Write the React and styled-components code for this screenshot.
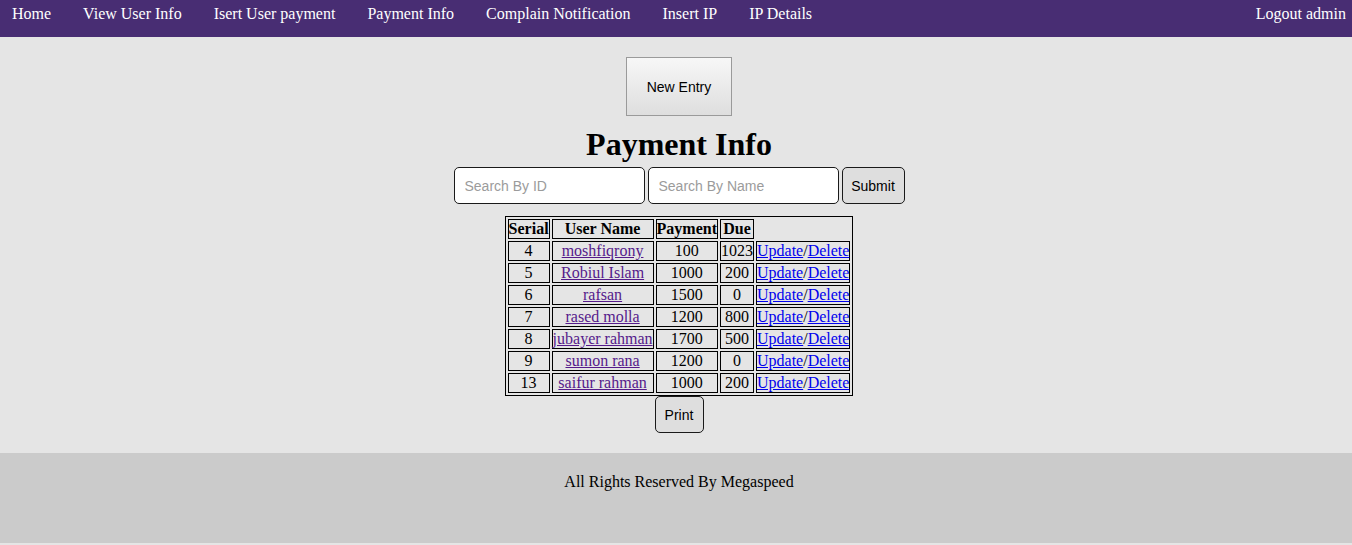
import React from "react";
import styled, { createGlobalStyle } from "styled-components";

const Global = createGlobalStyle`
  html, body { margin: 0; padding: 0; background: #e5e5e5; }
  body { font-family: "Liberation Serif", "Times New Roman", serif; font-size: 16px; color: #000; }
`;

const Nav = styled.nav`
  display: flex;
  align-items: center;
  height: 37px;
  background: #482d73;
  padding: 0 6px 0 12px;
  box-sizing: border-box;
`;

const NavLinks = styled.div`
  display: flex;
  gap: 32px;
  flex: 1;
  margin-top: -9px;
`;

const NavLink = styled.a`
  color: #fff;
  text-decoration: none;
  font-size: 16px;
  line-height: 18px;
  white-space: nowrap;
`;

const Logout = styled(NavLink)`
  margin-top: -9px;
`;

const Main = styled.main`
  display: flex;
  flex-direction: column;
  align-items: center;
  padding: 20px 0 20px 6px;
`;

const EntryButton = styled.button`
  font-family: "Liberation Sans", Arial, sans-serif;
  font-size: 14px;
  color: #000;
  width: 106px;
  height: 59px;
  background: linear-gradient(#f7f7f7, #dedede);
  border: 1px solid #9a9a9a;
  border-radius: 0;
  padding: 0;
`;

const Title = styled.h1`
  font-size: 32px;
  font-weight: bold;
  margin: 10px 0 0;
  line-height: 37px;
`;

const SearchForm = styled.form`
  display: flex;
  gap: 3px;
  margin-top: 4px;
`;

const SearchInput = styled.input`
  box-sizing: border-box;
  width: 191px;
  height: 37px;
  border: 1px solid #1a1a1a;
  border-radius: 5px;
  background: #fff;
  padding: 0 10px;
  font-family: "Liberation Sans", Arial, sans-serif;
  font-size: 14px;
  &::placeholder { color: #9b9b9b; }
`;

const GreyButton = styled.button`
  box-sizing: border-box;
  height: 37px;
  width: ${p => p.$w}px;
  border: 1px solid #1a1a1a;
  border-radius: 5px;
  background: #dedede;
  font-family: "Liberation Sans", Arial, sans-serif;
  font-size: 14px;
  color: #000;
  padding: 0;
`;

const Table = styled.table`
  margin-top: 12px;
  border: 1px solid #000;
  border-spacing: 2px;
  font-size: 16px;
  line-height: 18px;
`;

const Th = styled.th`
  border: 1px solid #000;
  padding: 0 0;
  font-weight: bold;
`;

const Td = styled.td`
  border: ${p => (p.$empty ? "none" : "1px solid #000")};
  padding: 0 0;
  text-align: center;
`;

const NameLink = styled.a`
  color: #551a8b;
  text-decoration: underline;
`;

const ActionLink = styled.a`
  color: #0000ee;
  text-decoration: underline;
`;

const Slash = styled.span`
  color: #000;
`;

const Footer = styled.footer`
  background: #cbcbcb;
  height: 90px;
  box-sizing: border-box;
  padding: 20px 0 0 6px;
  text-align: center;
  font-size: 16px;
  line-height: 18px;
`;

const rows = [
  [4, "moshfiqrony", 100, 1023],
  [5, "Robiul Islam", 1000, 200],
  [6, "rafsan", 1500, 0],
  [7, "rased molla", 1200, 800],
  [8, "jubayer rahman", 1700, 500],
  [9, "sumon rana", 1200, 0],
  [13, "saifur rahman", 1000, 200],
];

const links = ["Home", "View User Info", "Isert User payment", "Payment Info", "Complain Notification", "Insert IP", "IP Details"];

export default function App() {
  return (
    <>
      <Global />
      <Nav>
        <NavLinks>
          {links.map(l => (
            <NavLink key={l} href="#">{l}</NavLink>
          ))}
        </NavLinks>
        <Logout href="#">Logout admin</Logout>
      </Nav>
      <Main>
        <EntryButton>New Entry</EntryButton>
        <Title>Payment Info</Title>
        <SearchForm onSubmit={e => e.preventDefault()}>
          <SearchInput placeholder="Search By ID" />
          <SearchInput placeholder="Search By Name" />
          <GreyButton $w={63}>Submit</GreyButton>
        </SearchForm>
        <Table>
          <thead>
            <tr>
              <Th>Serial</Th>
              <Th>User Name</Th>
              <Th>Payment</Th>
              <Th>Due</Th>
              <Td $empty />
            </tr>
          </thead>
          <tbody>
            {rows.map(r => (
              <tr key={r[0]}>
                <Td>{r[0]}</Td>
                <Td><NameLink href="#">{r[1]}</NameLink></Td>
                <Td>{r[2]}</Td>
                <Td>{r[3]}</Td>
                <Td>
                  <ActionLink href="#">Update</ActionLink>
                  <Slash>/</Slash>
                  <ActionLink href="#">Delete</ActionLink>
                </Td>
              </tr>
            ))}
          </tbody>
        </Table>
        <GreyButton $w={49}>Print</GreyButton>
      </Main>
      <Footer>All Rights Reserved By Megaspeed</Footer>
    </>
  );
}
